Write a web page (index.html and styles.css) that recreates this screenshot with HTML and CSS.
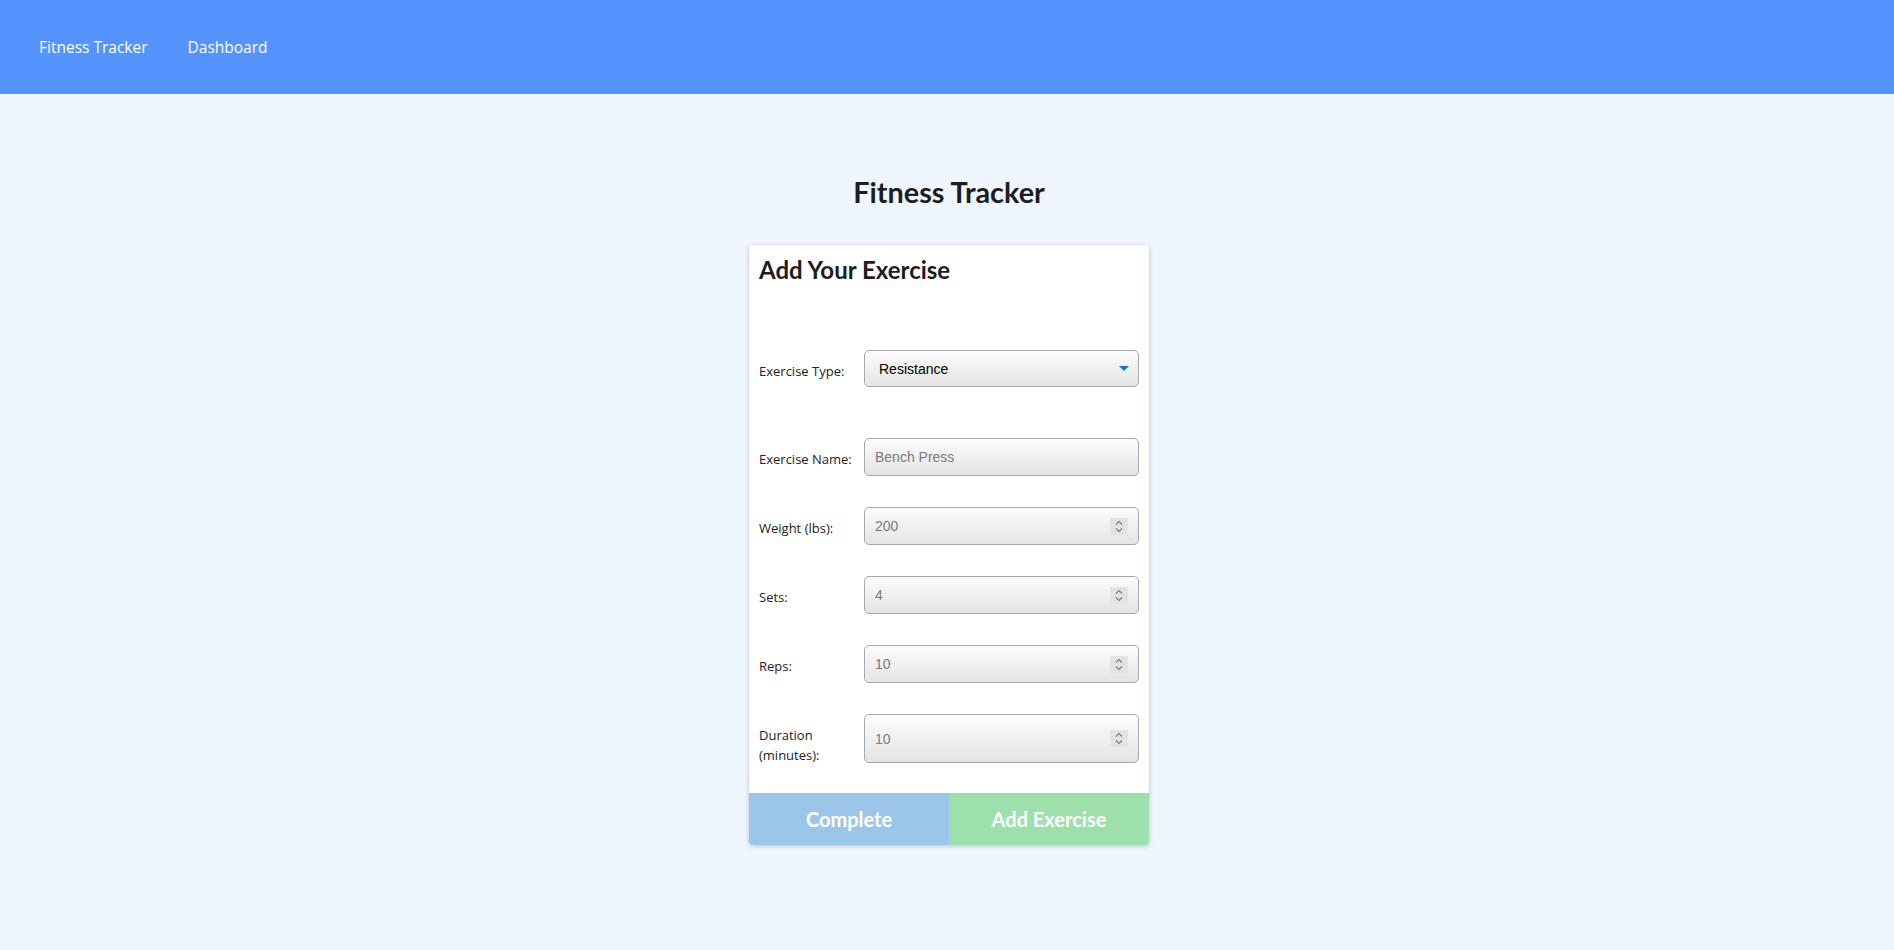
FILE: index.html
```html
<!DOCTYPE html>
<html lang="en">
<head>
  <meta charset="UTF-8" />
  <meta name="viewport" content="width=device-width, initial-scale=1.0" />
  <title>Fitness Tracker</title>
  <link rel="stylesheet" href="styles.css">
</head>
<body>

<nav class="topbar">
  <a href="#">Fitness Tracker</a>
  <a href="#">Dashboard</a>
</nav>

<main class="page">
  <h1 class="page-title">Fitness Tracker</h1>

  <div class="card">
    <h2>Add Your Exercise</h2>

    <form id="exerciseForm">
      <div class="row row-type">
        <label for="type">Exercise Type:</label>
        <div class="field select-field">
          <span class="select-value" id="type">Resistance</span>
          <svg class="caret" width="10" height="5" viewBox="0 0 10 5"><path d="M0 0h10L5 5z" fill="#0d7cc3"/></svg>
        </div>
      </div>

      <div class="row">
        <label for="name">Exercise Name:</label>
        <div class="field">
          <input type="text" id="name" placeholder="Bench Press" />
        </div>
      </div>

      <div class="row">
        <label for="weight">Weight (lbs):</label>
        <div class="field">
          <input type="text" id="weight" placeholder="200" />
          <span class="spin"><svg width="8" height="13" viewBox="0 0 8 13"><path d="M1 4.5l3-3 3 3M1 8.5l3 3 3-3" fill="none" stroke="#7d7d80" stroke-width="1.2"/></svg></span>
        </div>
      </div>

      <div class="row">
        <label for="sets">Sets:</label>
        <div class="field">
          <input type="text" id="sets" placeholder="4" />
          <span class="spin"><svg width="8" height="13" viewBox="0 0 8 13"><path d="M1 4.5l3-3 3 3M1 8.5l3 3 3-3" fill="none" stroke="#7d7d80" stroke-width="1.2"/></svg></span>
        </div>
      </div>

      <div class="row">
        <label for="reps">Reps:</label>
        <div class="field">
          <input type="text" id="reps" placeholder="10" />
          <span class="spin"><svg width="8" height="13" viewBox="0 0 8 13"><path d="M1 4.5l3-3 3 3M1 8.5l3 3 3-3" fill="none" stroke="#7d7d80" stroke-width="1.2"/></svg></span>
        </div>
      </div>

      <div class="row row-tall">
        <label for="duration">Duration (minutes):</label>
        <div class="field">
          <input type="text" id="duration" placeholder="10" />
          <span class="spin"><svg width="8" height="13" viewBox="0 0 8 13"><path d="M1 4.5l3-3 3 3M1 8.5l3 3 3-3" fill="none" stroke="#7d7d80" stroke-width="1.2"/></svg></span>
        </div>
      </div>
    </form>

    <div class="card-actions">
      <button type="button" class="btn-complete">Complete</button>
      <button type="submit" form="exerciseForm" class="btn-add">Add Exercise</button>
    </div>
  </div>
</main>

</body>
</html>
```

FILE: styles.css
```css
body {
  margin: 0;
  min-height: 100vh;
  background-color: #eff6ff;
  font-family: 'Open Sans', 'Noto Sans', sans-serif;
  color: #222;
}

.topbar {
  height: 94px;
  background-color: #5593ff;
  display: flex;
  align-items: center;
  gap: 40px;
  padding-left: 39px;
}

.topbar a {
  color: white;
  text-decoration: none;
  font-size: 15.5px;
  line-height: 20px;
}

.page {
  padding-top: 80px;
  padding-left: 4px;
}

.page-title {
  margin: 0 0 35px;
  text-align: center;
  font-family: 'Lato', 'Inter', sans-serif;
  font-weight: 700;
  font-size: 28.8px;
  line-height: 36px;
  color: #1d1d1f;
}

.card {
  width: 400px;
  margin: 0 auto;
  background-color: white;
  border-radius: 4px;
  box-shadow: 0 1px 5px rgba(0, 0, 0, 0.22);
  overflow: hidden;
}

.card h2 {
  margin: 0;
  padding: 10px 10px 0;
  font-family: 'Lato', 'Inter', sans-serif;
  font-weight: 700;
  font-size: 24px;
  line-height: 30px;
  color: #1d1d1f;
}

form {
  padding: 65px 10px 0;
}

.row {
  display: flex;
  align-items: flex-start;
  margin-bottom: 31px;
}

.row-type {
  margin-bottom: 51px;
}

.row-tall {
  margin-bottom: 28px;
}

.row label {
  flex: none;
  width: 105px;
  padding-top: 11px;
  padding-right: 10px;
  box-sizing: border-box;
  font-size: 13px;
  line-height: 20px;
  color: #222;
}

.field {
  flex: 1;
  height: 38px;
  box-sizing: border-box;
  display: flex;
  align-items: center;
  padding: 0 10px;
  border: 1px solid #a8a8a8;
  border-radius: 5px;
  background: linear-gradient(to bottom, #fcfcfc, #e4e4e4);
}

.select-field {
  height: 37px;
  padding: 0 9px 0 14px;
  justify-content: space-between;
}

.row-tall .field {
  height: 49px;
}

.select-value {
  font-family: 'Liberation Sans', Arial, sans-serif;
  font-size: 14px;
  color: #000;
}

.field input {
  flex: 1;
  min-width: 0;
  border: none;
  background: transparent;
  padding: 0;
  outline: none;
  font-family: 'Liberation Sans', Arial, sans-serif;
  font-size: 14px;
  color: #000;
}

.field input::placeholder {
  color: #7a7a7a;
}

.spin {
  flex: none;
  width: 18px;
  height: 17px;
  display: flex;
  align-items: center;
  justify-content: center;
  background-color: #e3e3e7;
}

.card-actions {
  display: flex;
}

.card-actions button {
  flex: 1;
  height: 52px;
  border: none;
  padding: 0;
  font-family: 'Lato', 'Inter', sans-serif;
  font-weight: 700;
  font-size: 20px;
  color: white;
  cursor: pointer;
}

.btn-complete {
  background-color: #9bc6ea;
}

.btn-add {
  background-color: #9de0ab;
}
```
